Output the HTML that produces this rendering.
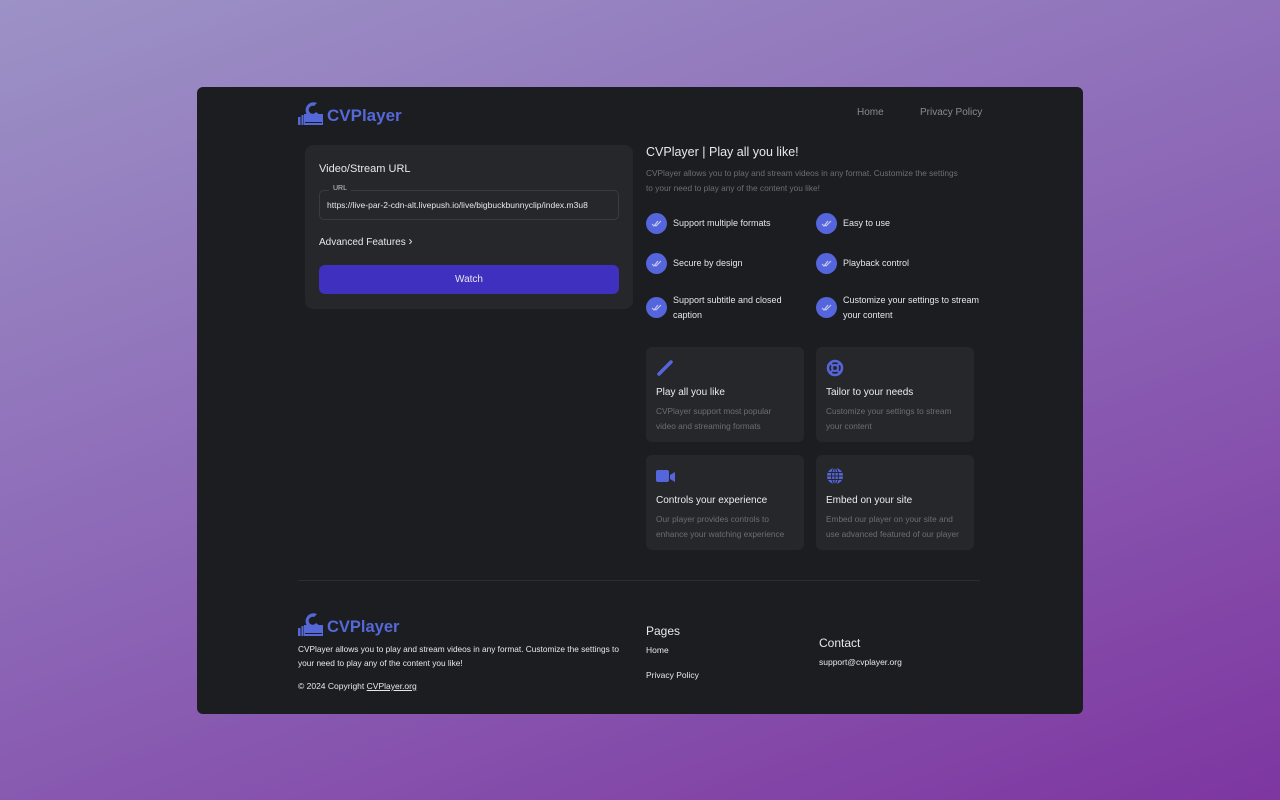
<!DOCTYPE html>
<html><head><meta charset="utf-8"><style>
*{box-sizing:border-box;margin:0;padding:0}
body{width:1280px;height:800px;overflow:hidden;font-family:"Liberation Sans",sans-serif;background:linear-gradient(160deg,#9c92c6 0%,#8c66b6 50%,#7e36a0 100%);position:relative}
.card{position:absolute;left:197px;top:87px;width:886px;height:627px;background:#1c1d20;border-radius:6px}
.abs{position:absolute}
.logo{display:flex;align-items:center;color:#5468d8;font-weight:bold;font-size:17px}
.panel{background:#26272b;border-radius:8px}
.w{color:#e8e8ea}
.g{color:#77787d}
.chk{width:21px;height:21px;border-radius:50%;background:#5565db;display:flex;align-items:center;justify-content:center}
.feat{position:absolute;font-size:9px;color:#e6e6e8;line-height:15px}
.box{position:absolute;width:158px;height:95px;background:#26272b;border-radius:6px}
.box h4{position:absolute;left:10px;top:40px;font-size:10px;font-weight:normal;color:#ececee}
.box p{position:absolute;left:10px;top:57px;font-size:8.3px;color:#6d6e73;line-height:14.5px;width:136px}
.box svg{position:absolute;left:10px;top:12px}
</style></head><body>
<div class="card">
<svg class="abs" style="left:101px;top:12px" width="27" height="27" viewBox="0 0 27 27"><path d="M19 4 A8 8 0 1 0 22 16 L18 13 A4 4 0 1 1 16 7 Z" fill="#5468d8"/><rect x="6" y="15" width="19" height="11" fill="#5468d8"/><rect x="0" y="18" width="2.5" height="8" fill="#5468d8"/><rect x="3.5" y="16" width="2" height="10" fill="#5468d8"/><rect x="7" y="23" width="17" height="1" fill="#1c1d20"/></svg>
<div class="abs logo" style="left:130px;top:19px">CVPlayer</div>
<div class="abs g" style="left:660px;top:20px;font-size:10px;color:#8a8b90">Home</div>
<div class="abs" style="left:723px;top:20px;font-size:10px;color:#8a8b90">Privacy Policy</div>

<div class="abs panel" style="left:108px;top:58px;width:328px;height:164px">
 <div class="abs w" style="left:14px;top:18px;font-size:11px">Video/Stream URL</div>
 <div class="abs" style="left:14px;top:45px;width:300px;height:30px;border:1px solid #3a3b40;border-radius:5px"></div>
 <div class="abs" style="left:24px;top:40px;font-size:7px;color:#ccc;background:#26272b;padding:0 4px">URL</div>
 <div class="abs w" style="left:22px;top:55px;font-size:8.5px">https://live-par-2-cdn-alt.livepush.io/live/bigbuckbunnyclip/index.m3u8</div>
 <div class="abs w" style="left:14px;top:89px;font-size:10px">Advanced Features <span style="font-size:12px">&#x203A;</span></div>
 <div class="abs" style="left:14px;top:120px;width:300px;height:29px;background:#3f30c0;border-radius:6px;color:#e6e6f0;font-size:10px;text-align:center;line-height:29px">Watch</div>
</div>

<div class="abs w" style="left:449px;top:58px;font-size:12.5px">CVPlayer | Play all you like!</div>
<div class="abs" style="left:449px;top:79px;font-size:8.3px;color:#6d6e73;line-height:14.5px;width:318px">CVPlayer allows you to play and stream videos in any format. Customize the settings to your need to play any of the content you like!</div>

<div class="abs chk" style="left:449px;top:126px"><svg width="11" height="8" viewBox="0 0 11 8"><path d="M1 4l2 2 4-5M4 5l1 1 5-5" stroke="#c7ccf4" stroke-width="1.1" fill="none"/></svg></div>
<div class="feat" style="left:476px;top:129px">Support multiple formats</div>
<div class="abs chk" style="left:619px;top:126px"><svg width="11" height="8" viewBox="0 0 11 8"><path d="M1 4l2 2 4-5M4 5l1 1 5-5" stroke="#c7ccf4" stroke-width="1.1" fill="none"/></svg></div>
<div class="feat" style="left:646px;top:129px">Easy to use</div>
<div class="abs chk" style="left:449px;top:166px"><svg width="11" height="8" viewBox="0 0 11 8"><path d="M1 4l2 2 4-5M4 5l1 1 5-5" stroke="#c7ccf4" stroke-width="1.1" fill="none"/></svg></div>
<div class="feat" style="left:476px;top:169px">Secure by design</div>
<div class="abs chk" style="left:619px;top:166px"><svg width="11" height="8" viewBox="0 0 11 8"><path d="M1 4l2 2 4-5M4 5l1 1 5-5" stroke="#c7ccf4" stroke-width="1.1" fill="none"/></svg></div>
<div class="feat" style="left:646px;top:169px">Playback control</div>
<div class="abs chk" style="left:449px;top:210px"><svg width="11" height="8" viewBox="0 0 11 8"><path d="M1 4l2 2 4-5M4 5l1 1 5-5" stroke="#c7ccf4" stroke-width="1.1" fill="none"/></svg></div>
<div class="feat" style="left:476px;top:206px;width:130px">Support subtitle and closed caption</div>
<div class="abs chk" style="left:619px;top:210px"><svg width="11" height="8" viewBox="0 0 11 8"><path d="M1 4l2 2 4-5M4 5l1 1 5-5" stroke="#c7ccf4" stroke-width="1.1" fill="none"/></svg></div>
<div class="feat" style="left:646px;top:206px;width:140px">Customize your settings to stream your content</div>

<div class="box" style="left:449px;top:260px"><svg width="18" height="18" viewBox="0 0 18 18"><path d="M3 15L15 3" stroke="#5565db" stroke-width="3.5" stroke-linecap="round"/></svg><h4>Play all you like</h4><p>CVPlayer support most popular video and streaming formats</p></div>
<div class="box" style="left:619px;top:260px"><svg width="18" height="18" viewBox="0 0 18 18"><circle cx="9" cy="9" r="7" stroke="#5565db" stroke-width="2.5" fill="none"/><circle cx="9" cy="9" r="3" stroke="#5565db" stroke-width="2" fill="none"/><path d="M4 4l3 3M14 4l-3 3M4 14l3-3M14 14l-3-3" stroke="#5565db" stroke-width="2"/></svg><h4>Tailor to your needs</h4><p>Customize your settings to stream your content</p></div>
<div class="box" style="left:449px;top:368px"><svg width="20" height="18" viewBox="0 0 20 18"><rect x="0" y="3" width="13" height="12" rx="2" fill="#5565db"/><path d="M14 8l5-3v10l-5-3z" fill="#5565db"/></svg><h4>Controls your experience</h4><p>Our player provides controls to enhance your watching experience</p></div>
<div class="box" style="left:619px;top:368px"><svg width="18" height="18" viewBox="0 0 18 18"><circle cx="9" cy="9" r="8" fill="#5565db"/><path d="M1 9h16M2 5.5h14M2 12.5h14M9 1v16" stroke="#26272b" stroke-width="1"/><ellipse cx="9" cy="9" rx="3.5" ry="8" stroke="#26272b" stroke-width="1" fill="none"/></svg><h4>Embed on your site</h4><p>Embed our player on your site and use advanced featured of our player</p></div>

<div class="abs" style="left:101px;top:493px;width:682px;height:1px;background:#2c2d31"></div>

<svg class="abs" style="left:101px;top:523px" width="27" height="27" viewBox="0 0 27 27"><path d="M19 4 A8 8 0 1 0 22 16 L18 13 A4 4 0 1 1 16 7 Z" fill="#5468d8"/><rect x="6" y="15" width="19" height="11" fill="#5468d8"/><rect x="0" y="18" width="2.5" height="8" fill="#5468d8"/><rect x="3.5" y="16" width="2" height="10" fill="#5468d8"/><rect x="7" y="23" width="17" height="1" fill="#1c1d20"/></svg>
<div class="abs logo" style="left:130px;top:531px;font-size:16.5px">CVPlayer</div>
<div class="abs w" style="left:101px;top:555px;font-size:8.3px;line-height:14px;width:334px">CVPlayer allows you to play and stream videos in any format. Customize the settings to your need to play any of the content you like!</div>
<div class="abs w" style="left:101px;top:594px;font-size:8.5px">© 2024 Copyright <u>CVPlayer.org</u></div>
<div class="abs w" style="left:449px;top:537px;font-size:12px">Pages</div>
<div class="abs w" style="left:449px;top:558px;font-size:8.5px">Home</div>
<div class="abs w" style="left:449px;top:583px;font-size:8.5px">Privacy Policy</div>
<div class="abs w" style="left:622px;top:549px;font-size:12px">Contact</div>
<div class="abs w" style="left:622px;top:570px;font-size:8.5px">support@cvplayer.org</div>
</div>
</body></html>
